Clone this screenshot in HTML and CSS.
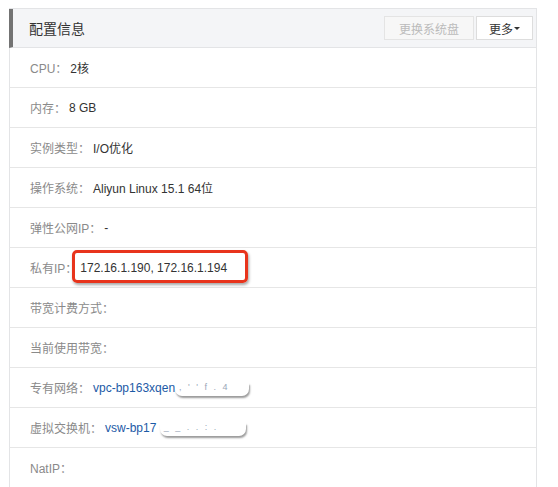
FILE: index.html
```html
<!DOCTYPE html>
<html lang="zh-CN">
<head>
  <meta charset="UTF-8" />
  <title>配置信息</title>
  <link rel="stylesheet" href="styles.css">
</head>
<body>

<div class="panel">
  <!-- Header -->
  <div class="panel-head">
    <span class="panel-title">配置信息</span>
    <div class="actions">
      <button class="btn btn-disabled">更换系统盘</button>
      <button class="btn">更多<span class="caret"></span></button>
    </div>
  </div>

  <!-- Rows -->
  <div class="row"><span class="label">CPU：</span><span class="value">2核</span></div>
  <div class="row"><span class="label">内存：</span><span class="value">8 GB</span></div>
  <div class="row"><span class="label">实例类型：</span><span class="value">I/O优化</span></div>
  <div class="row"><span class="label">操作系统：</span><span class="value">Aliyun Linux 15.1 64位</span></div>
  <div class="row"><span class="label">弹性公网IP：</span><span class="value">-</span></div>
  <div class="row row-mark">
    <span class="label">私有IP：</span><span class="value">172.16.1.190, 172.16.1.194</span>
    <div class="mark"></div>
  </div>
  <div class="row"><span class="label">带宽计费方式：</span></div>
  <div class="row"><span class="label">当前使用带宽：</span></div>
  <div class="row">
    <span class="label">专有网络：</span>
    <a class="link" href="#">vpc-bp163xqen<span class="blur blur-vpc">, ' ' f . 4</span></a>
  </div>
  <div class="row">
    <span class="label">虚拟交换机：</span>
    <a class="link" href="#">vsw-bp17 <span class="blur blur-vsw">_ _ . . : .</span></a>
  </div>
  <div class="row"><span class="label">NatIP：</span></div>
</div>

</body>
</html>
```

FILE: styles.css
```css
body {
  margin: 0;
  background: #fff;
  color: #333;
  font-family: "Liberation Sans", "Noto Sans CJK SC", sans-serif;
  font-size: 12px;
}

.panel {
  margin: 8px 0 0 9px;
  width: 527px;
  border-top: 1px solid #e3e4e6;
  border-right: 1px solid #e3e4e6;
}

.panel-head {
  display: flex;
  align-items: center;
  justify-content: space-between;
  height: 38px;
  padding: 0 3px 0 16px;
  background: #f4f5f7;
  border-left: 4px solid #737373;
  border-bottom: 1px solid #e3e4e6;
}

.panel-title {
  font-size: 14px;
  color: #333;
}

.actions {
  display: flex;
  gap: 2px;
}

.btn {
  height: 24px;
  padding: 0 12px;
  background: #fff;
  border: 1px solid #ddd;
  color: #333;
  font-family: "Liberation Sans", "Noto Sans CJK SC", sans-serif;
  font-size: 12px;
  display: flex;
  align-items: center;
  cursor: pointer;
}

.btn-disabled {
  padding: 0 14px;
  background: #f7f7f7;
  color: #bbb;
  border-color: #e4e4e4;
  cursor: default;
}

.caret {
  width: 0;
  height: 0;
  margin-left: 1px;
  border-left: 3px solid transparent;
  border-right: 3px solid transparent;
  border-top: 3px solid #333;
}

.row {
  display: flex;
  align-items: center;
  height: 39px;
  padding-left: 20px;
  border-left: 1px solid #e3e4e6;
  border-bottom: 1px solid #e6e6e6;
}

.label {
  color: #8a8a8a;
}

.value {
  margin-left: 3px;
  color: #333;
}

.row-mark {
  position: relative;
}

.mark {
  position: absolute;
  left: 62px;
  top: 2px;
  width: 170px;
  height: 27px;
  border: 3px solid #e8341c;
  border-radius: 5px;
  box-shadow: 1px 2px 3px rgba(0, 0, 0, 0.35);
}

.link {
  margin-left: 3px;
  color: #1c5aa6;
  text-decoration: none;
}

.blur {
  display: inline-block;
  vertical-align: top;
  position: relative;
  top: 2px;
  height: 13px;
  padding-left: 4px;
  line-height: 9px;
  background: #fff;
  color: #9aa6b8;
  font-size: 9px;
  letter-spacing: 2px;
  border-radius: 0 0 7px 7px;
  box-shadow: 1px 2px 2px rgba(0, 0, 0, 0.4);
  white-space: nowrap;
  box-sizing: border-box;
}

.blur-vpc {
  width: 74px;
}

.blur-vsw {
  width: 86px;
}
```
